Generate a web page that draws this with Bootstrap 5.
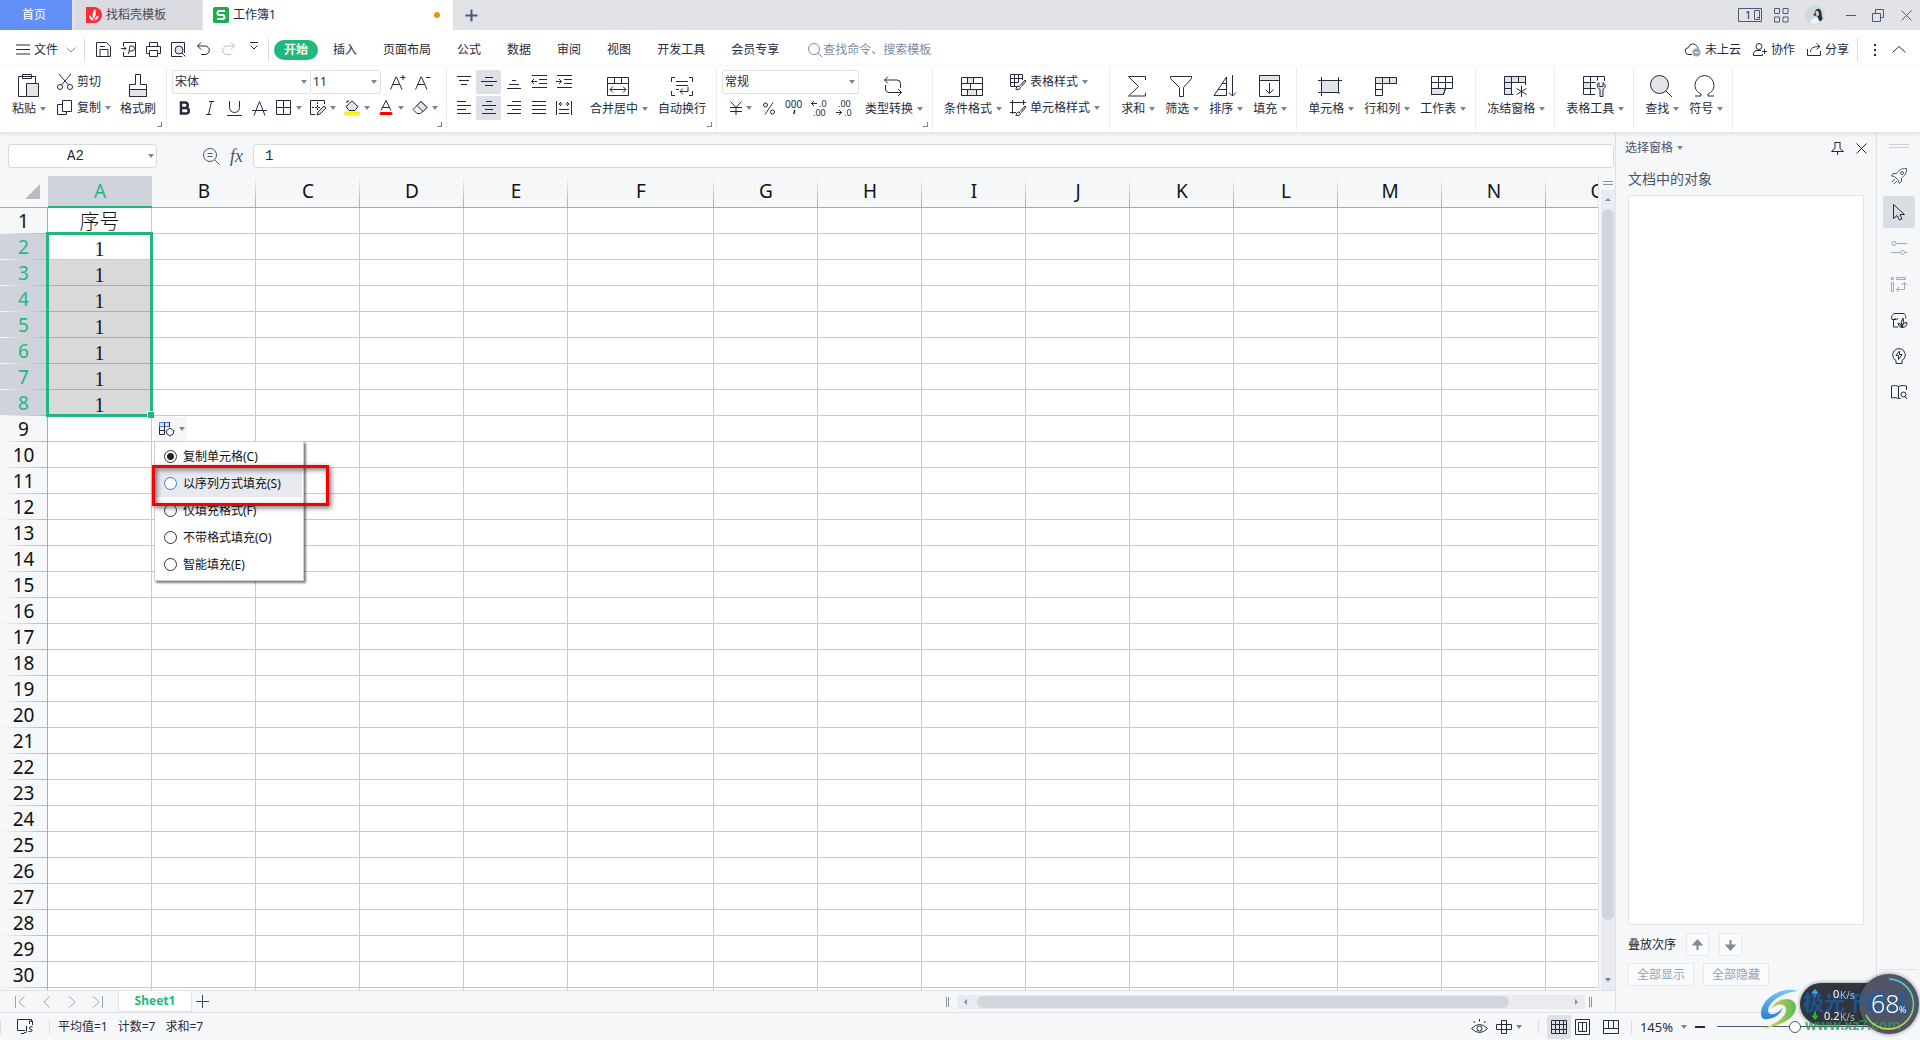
<!DOCTYPE html>
<html lang="zh-CN">
<head>
<meta charset="utf-8">
<meta name="viewport" content="width=device-width, initial-scale=1">
<title>工作簿1</title>
<link href="https://cdn.jsdelivr.net/npm/bootstrap@5.3.0/dist/css/bootstrap.min.css" rel="stylesheet">
<style>
:root{--ink:#252b3d;--muted:#7a859c;--line:#e0e2e8;--pane:#f6f7f9;--cell:#c3c9d8;--go:#21b97b}
body{font:12px/18px "Noto Sans","Noto Sans CJK SC",sans-serif;color:var(--ink);background:var(--pane);height:100vh;overflow:hidden}
button,input,select{font:inherit;color:inherit;padding:0;border:0;background:none}
button{white-space:nowrap}
svg{display:block;flex:none;fill:none;stroke:var(--ink);overflow:visible}
svg text{fill:var(--ink);stroke:none;font-family:"Noto Sans",sans-serif}
.shade{fill:#e3e4e8}
.drop{flex:none;width:0;border:3px solid transparent;border-top:4px solid #7a859c;border-bottom:0}
.vline{flex:none;width:1px;background:#dcdee3}
/* title bar */
.titlebar{height:30px;background:#e1e3e7}
.titlebar svg{stroke:#4b5a7a}
.titlebar .vline{height:20px}
.tab-home{width:72px;background:#628ff8;color:#fff;padding-right:4px}
.tab-doc{width:126px;background:#d9dbe0;margin-left:3px;padding-left:11px;color:#454c60}
.tab-live{width:250px;background:#fff;margin-left:2px;padding:0 13px 0 10px}
.unsaved{width:6px;height:6px;border-radius:50%;background:#e39a06}
/* menu row */
.menubar{height:36px;background:#fff;padding:3px 10px 0 16px}
.menubar .vline{height:24px}
.menu-item{padding:0 13px;color:var(--ink);text-decoration:none}
.menu-now{background:var(--go);color:#fff;font-weight:700;border-radius:10px;padding:1px 10px;margin:0 2px 0 5px}
.quick{width:25px;display:flex;justify-content:center}
.quick-set{margin-left:2px;margin-right:2px}
.cloud-set{gap:12px}
.find-box{width:130px}
.find-box::placeholder{color:#7f89a0;opacity:1}
/* ribbon */
.ribbon{height:67px;background:#fff;padding:2px 0;border-bottom:1px solid #e4e5e9;box-shadow:0 1px 4px #0000001c;position:relative;z-index:1}
.grp{position:relative;display:flex;padding:0 5px;border-right:1px solid #ebecef}
.grp-corner{position:absolute;right:4px;bottom:3px;width:5px;height:5px;border:solid #7a859c;border-width:0 1px 1px 0}
.grp-clip{padding:0 4px 0 6px}
.clip-pair{padding:0 3px 0 7px}
.big{display:flex;flex-direction:column;align-items:center;padding:4px 6px 0}
.big .pic{height:28px;display:flex;align-items:center}
.cap,.lab{display:flex;align-items:center}
.cap .drop{margin:0 -2px 0 4px}
.two{display:flex;flex-direction:column;padding-top:2px;gap:2px}
.two>*{height:24px}
.lab{gap:4px}
.k{width:25px;height:24px;display:flex;align-items:center;justify-content:center}
.kd{width:34px;height:24px;display:flex;align-items:center;gap:4px;padding-left:4px}
.k-on{background:#dde1e7;border-radius:2px}
.pick{display:flex;align-items:center;border:1px solid #dfe1e6;border-radius:2px;padding-right:3px;background:#fff}
.pick select{appearance:none;flex:1;min-width:0;padding-left:2px;height:22px;outline:0}
.pick-font{width:139px}
.pick-size{width:70px}
.pick-num{width:137px}
/* formula bar */
.fbar{padding:11px 1px 8px 8px;height:43px}
.namebox{width:149px;height:24px;border:1px solid #d9dbe1;border-radius:3px;background:#fff;padding-right:2px}
.namebox input{flex:1;min-width:0;padding-right:6px;text-align:center;font:14px "Liberation Mono",monospace}
.lens{margin-left:46px}
.fx{width:33px;font:italic 18px "Liberation Serif",serif;color:#4a5368}
.fedit{border:1px solid #d9dbe1;border-radius:3px;background:#fff;height:24px;padding:0 11px;font:14px "Liberation Mono",monospace}
/* sheet */
.sheet{position:relative;overflow:hidden;background:#fff;border-right:1px solid var(--line)}
.cells{table-layout:fixed;width:1650px;border-collapse:separate;border-spacing:0}
.cells th,.cells td{height:26px;padding:0;text-align:center;border:solid var(--cell);border-width:0 1px 1px 0;line-height:25px;overflow:hidden;white-space:nowrap}
.cells th{font-size:19px;font-weight:400;color:#111;background:var(--pane)}
.cells thead th{height:32px;line-height:31px;border-bottom-color:#9fabc4;border-right:0;background:linear-gradient(#f6f7f9,#9fabc4) right/1px 100% no-repeat var(--pane)}
.cells tbody th{border-right-color:#9fabc4;border-bottom:0;background:linear-gradient(90deg,#f6f7f9,#aab4c8) bottom/100% 1px no-repeat var(--pane)}
.cells tbody th{line-height:24px}
.cells thead th.sel{background:#d0d3db;color:var(--go);border-bottom:2px solid var(--go);line-height:30px}
.cells tbody th.sel{background-color:#d0d3db;color:var(--go)}
.cells td{font:20px/25px "Liberation Serif","Noto Sans CJK SC",serif;color:#111}
.cells td span{display:block;height:25px;line-height:30px}
.cells td .word{font-weight:300;line-height:29px}
.cells td.fill{background:#d9d9d9;border-bottom-color:#a9adb8}
.cells thead th.corner{background:var(--pane)}
.range{position:absolute;left:46px;top:56px;width:107px;height:185px;border:3px solid var(--go)}
.range::after{content:"";position:absolute;right:-4px;bottom:-4px;width:7px;height:7px;background:var(--go);border:solid #fff;border-width:1px 0 0 1px}
.fillbtn{position:absolute;left:154px;top:241px;width:33px;height:24px;background:var(--pane);display:flex;align-items:center;gap:4px;padding-left:5px}
.fillmenu{position:absolute;left:154px;top:265px;width:150px;background:#fff;border:1px solid #cfd0d4;box-shadow:2px 2px 2px #00000080;padding:1px 1px 2px;color:#111}
.fillmenu label{display:flex;align-items:center;height:27px;padding-left:8px;gap:6px}
.fillmenu .hot{background:#e7e9ef}
.fillmenu input{appearance:none;flex:none;width:13px;height:13px;border:1px solid #333;border-radius:50%;background:#fff}
.fillmenu input:checked{background:radial-gradient(#222 0 3px,#fff 4px)}
.fillmenu .hot input{border-color:#1b82d6}
.hilite{position:absolute;left:152px;top:289px;width:177px;height:41px;border:3px solid #f60000;box-shadow:2px 2px 5px #0008,inset 2px 2px 5px #0008}
/* scroll bars */
.vbar{width:16px;padding:0 1px 0 2px}
.vtrack{background:#e9ebf0;padding:8px 1px}
.vthumb{width:12px;background:#d2d5dd;border-radius:6px;margin-bottom:58px}
.tri{flex:none;width:0;border:3px solid transparent}
.tri-up{border-bottom-color:#7f8cab}
.tri-left{border-right-color:#7f8cab}
.tri-right{border-left-color:#7f8cab}
.tabsrow{height:22px;border-top:1px solid var(--line)}
.tabsrow svg{stroke:#9ba2b0}
.turns{padding:0 7px}
.turn{width:26px;display:flex;justify-content:center}
.tab-sheet{width:74px;height:21px;background:#fff;border:1px solid var(--line);border-top:0;color:var(--go);font-weight:700}
.htrack{width:628px;height:14px;background:#e9ebf0;padding:0 7px}
.hthumb{height:12px;background:#d2d5dd;border-radius:6px;margin:0 66px 0 2px}
.grip{width:3px;height:10px;border:solid #8b93a8;border-width:0 1px}
.grip-end{margin-right:23px}
/* selection pane and tool strip */
.pane{width:262px;border-left:1px solid var(--line);border-right:1px solid var(--line);padding:6px 9px 0 9px;color:#4a5368}
.pane h2{font-size:14px;line-height:20px;margin:12px 0 6px 3px;font-weight:400}
.objlist{border:1px solid var(--line);border-radius:2px;background:#fff;margin:0 3px}
.pbtn{height:23px;border:1px solid #e6e8ed;background:#fafbfc;color:#98a1b3}
.pbtn-sq{width:23px;margin-left:10px}
.order{margin:8px 0 0 3px}
.showhide{gap:9px;margin:7px 0 26px 3px}
.strip{width:43px;padding-top:11px}
.strip button{width:32px;height:32px;margin-bottom:4px;display:flex;align-items:center;justify-content:center;border-radius:3px}
.strip .handle{margin-bottom:12px}
.strip .foot{margin-bottom:42px}
.strip .strip-on{background:#d9dde4}
.pale{stroke:#a0a7b5}
/* status bar */
.status{height:28px;border-top:1px solid var(--line);padding:0 22px 0 0}
.status .vline{height:14px}
.sums{gap:10px}
.zoom-pct{font-size:13px}
.vw{width:24px;height:24px;display:flex;align-items:center;justify-content:center}
.zoomer{appearance:none;width:168px;height:14px;background:linear-gradient(#4b5a7a,#4b5a7a) center/100% 1px no-repeat}
.zoomer::-webkit-slider-thumb{appearance:none;width:12px;height:12px;border-radius:50%;border:1px solid #555;background:#fff}
.meter{position:fixed;right:0;bottom:6px;width:160px;height:60px}
</style>
<script src="https://cdn.jsdelivr.net/npm/bootstrap@5.3.0/dist/js/bootstrap.bundle.min.js"></script>
</head>
<body class="d-flex flex-column">

<header class="titlebar d-flex align-items-center flex-shrink-0">
  <button class="tab-home h-100">首页</button>
  <button class="tab-doc h-100 d-flex align-items-center gap-1"><svg width="16" height="16"><path d="M0 0h8a8 8 0 0 1 0 16H0z" fill="#fb2d3c" stroke="none"/><path d="M7.500 14c-3-1-4.500-3-4.500-6 2 1 4 3 4.500 6zM7.500 12C5.800 8 6.500 4.500 9 2c1.500 3.500 1 7-1.500 10zM8.500 13.500c.3-2.500 1.500-4 4-5 .3 2.500-1 4.500-4 5z" fill="#fff" stroke="none"/></svg>找稻壳模板</button>
  <button class="tab-live h-100 d-flex align-items-center gap-1"><svg width="16" height="16"><rect width="16" height="16" rx="2" fill="#1ead4e" stroke="none"/><path d="M12 4H6.500a2 2 0 0 0 0 4h3a2 2 0 0 1 0 4H4" stroke="#fff" stroke-width="2"/></svg>工作簿1<span class="unsaved ms-auto"></span></button>
  <button class="ms-2 ps-1 pe-2" aria-label="新建标签"><svg width="13" height="13"><path d="M6.500.5v12M.5 6.500h12" stroke-width="2"/></svg></button>
  <div class="ms-auto d-flex align-items-center pe-2">
    <button aria-label="窗口"><svg width="24" height="14"><path d="M.5.5h23v13H.5zM16.500 2.500h5v9h-5zM19 9.500h2"/><text x="7" y="11" font-size="11">1</text></svg></button>
    <button class="ms-2 ps-1" aria-label="应用"><svg width="15" height="15"><path d="M.5.5h5v5h-5zM9 .5h5v5H9zM.5 9h5v5h-5zM9 9h5v5H9z"/></svg></button>
    <button class="ms-3" aria-label="账户"><svg width="20" height="20"><circle cx="10" cy="10" r="10" fill="#cddae1" stroke="none"/><path d="M11 4.500c3-2 5.500 0 5.500 4l1 6-3 2-2-5-4.500-1.500c2-1 2-4 3-5.500z" fill="#2d2b36" stroke="none"/><path d="M11 6c2-1 3 1 3 3s-1 2-2 2-2-3-1-5z" fill="#e8c3b4" stroke="none"/><path d="M5 18c1-4 4-6 7-5l3 4c-3 2-7 2-10 1z" fill="#eef6fa" stroke="none"/></svg></button>
    <span class="vline ms-2 me-2"></span>
    <button class="ms-1" aria-label="最小化"><svg width="10" height="10"><path d="M0 5.500h10"/></svg></button>
    <button class="ms-3" aria-label="还原"><svg width="13" height="13"><path d="M.5 4.500h8v8h-8zM3.500 4V.5h8v8H9"/></svg></button>
    <button class="ms-3 me-0" aria-label="关闭"><svg width="11" height="11"><path d="M.5.5l10 10M10.500.5l-10 10"/></svg></button>
  </div>
</header>

<nav class="menubar d-flex align-items-center flex-shrink-0">
  <button class="d-flex align-items-center"><svg width="14" height="12" class="me-1"><path d="M0 1h14M0 5.500h14M0 10h14"/></svg><span class="ms-0 me-2 ps-0">文件</span><svg width="10" height="6"><path d="M.5.5L5 5 9.500.5" stroke="#8c93a3"/></svg></button>
  <span class="vline ms-2 me-1"></span>
  <div class="quick-set d-flex">
  <button class="quick" aria-label="保存"><svg width="15" height="15"><path d="M.5.5h10l4 4v10H.5zM4 14V7.500h8V14M4 4.500h5"/></svg></button>
  <button class="quick" aria-label="输出"><svg width="16" height="15"><path d="M2.500 4V.5h12v14h-12V10M0 6.500h5M3 4.500l2 2-2 2M7.500 12l1.500-8h2a2 2 0 0 1 0 5H8"/></svg></button>
  <button class="quick" aria-label="打印"><svg width="15" height="15"><path d="M3.500 4V.5h8V4M3.500 11.500h-3v-7h14v7h-3M3.500 8.500h8v6h-8z"/></svg></button>
  <button class="quick" aria-label="预览"><svg width="15" height="15"><path d="M11 14.500H.5V.5h13V11"/><circle cx="8" cy="8" r="4" class="shade"/><path d="M11 11l3.500 3.500"/></svg></button>
  <button class="quick" aria-label="撤销"><svg width="13" height="13"><path d="M4 .5L.5 4 4 7.500M.5 4H8a4.200 4.200 0 0 1 0 8.500H4"/></svg></button>
  <button class="quick" aria-label="重做"><svg width="13" height="13"><path d="M9 .5L12.500 4 9 7.500M12.500 4H5a4.200 4.200 0 0 0 0 8.500h4" stroke="#b8bcc6"/></svg></button>
  <button class="quick" aria-label="更多"><svg width="8" height="8"><path d="M0 .5h8M.5 3.500L4 7l3.500-3.500"/></svg></button>
  </div>
  <span class="vline"></span>
  <a class="menu-item menu-now" href="#">开始</a><a class="menu-item" href="#">插入</a><a class="menu-item" href="#">页面布局</a><a class="menu-item" href="#">公式</a><a class="menu-item" href="#">数据</a><a class="menu-item" href="#">审阅</a><a class="menu-item" href="#">视图</a><a class="menu-item" href="#">开发工具</a><a class="menu-item" href="#">会员专享</a>
  <label class="d-flex align-items-center ms-3"><svg width="15" height="14"><circle cx="6" cy="6" r="5.500" stroke="#7f89a0"/><path d="M10 10l4 4" stroke="#7f89a0"/></svg><input class="find-box" placeholder="查找命令、搜索模板"></label>
  <div class="ms-auto d-flex align-items-center">
    <div class="cloud-set d-flex">
    <button class="d-flex align-items-center gap-1"><svg width="16" height="14"><path d="M7 11.500H4a3.500 3.500 0 0 1-.5-7A4.500 4.500 0 0 1 12 3.500a3 3 0 0 1 1 3"/><circle cx="11.500" cy="9.500" r="4" fill="#98a2b8" stroke="none"/><path d="M9.500 9.500h4" stroke="#fff"/></svg>未上云</button>
    <button class="d-flex align-items-center gap-1"><svg width="14" height="14"><circle cx="6" cy="3.500" r="3"/><path d="M8 7.500H3C1 8 .5 10 .5 12.500h9V11M9 8.500h5M11.500 6v5"/></svg>协作</button>
    <button class="d-flex align-items-center gap-1"><svg width="14" height="13"><path d="M.5 6v6.500h13V8M3.500 9c0-4 3-5.500 9-5.500M9.500.5l3.500 3-3.500 3"/></svg>分享</button>
    </div>
    <span class="vline ms-2"></span>
    <button class="px-3" aria-label="更多选项"><svg width="2" height="12"><path d="M1 0v2M1 5v2M1 10v2" stroke-width="2"/></svg></button>
    <button class="me-1" aria-label="收起功能区"><svg width="14" height="7"><path d="M.5 6.500L7 .5l6.500 6"/></svg></button>
  </div>
</nav>

<section class="ribbon d-flex flex-shrink-0" aria-label="开始">
  <div class="grp grp-clip">
    <button class="big"><span class="pic"><svg width="21" height="24"><path d="M8 22.500H.5v-20h17V9M4.500.5h9v4h-9z"/><path d="M8.500 9.500h12v13h-12z" class="shade"/></svg></span><span class="cap">粘贴<i class="drop"></i></span></button>
    <div class="two clip-pair">
      <button class="lab"><svg width="16" height="16"><path d="M2 0l9.500 11M14 0L4.500 11"/><circle cx="3" cy="13" r="2.500"/><circle cx="13" cy="13" r="2.500"/></svg>剪切</button>
      <button class="lab"><svg width="16" height="16"><path d="M5.500.5h9v11h-9zM5 4.500H.5v10h9V12"/></svg>复制<i class="drop"></i></button>
    </div>
    <button class="big"><span class="pic"><svg width="18" height="24"><path d="M6.500.5h5v10h6v12H.5v-12h6z"/><path d="M.5 15.500h17v7H.5z" class="shade"/></svg></span><span class="cap">格式刷</span></button>
    <i class="grp-corner"></i>
  </div>

  <div class="grp pe-1">
    <div class="two">
      <div class="d-flex">
        <div class="pick pick-font"><select aria-label="字体"><option>宋体</option></select><i class="drop"></i></div>
        <div class="pick pick-size border-start-0 me-1"><select aria-label="字号"><option>11</option></select><i class="drop"></i></div>
        <button class="k" aria-label="增大字号"><svg width="15" height="15"><path d="M.5 14.500L6 2h.5L12 14.500M2.500 9.500h7M10.500 2.500h5M13 0v5"/></svg></button>
        <button class="k" aria-label="减小字号"><svg width="15" height="15"><path d="M.5 14.500L6 2h.5L12 14.500M2.500 9.500h7M11 2.500h4.500"/></svg></button>
      </div>
      <div class="d-flex">
        <button class="k" aria-label="加粗"><svg width="11" height="14"><path d="M2 1.500h4a2.700 2.700 0 0 1 0 5.500H2zM2 7h5a2.700 2.700 0 0 1 0 5.500H2z" stroke-width="2.500"/></svg></button>
        <button class="k" aria-label="倾斜"><svg width="8" height="14"><path d="M3 .5h5M0 13.500h5M5.500.5l-3 13"/></svg></button>
        <button class="k" aria-label="下划线"><svg width="15" height="15"><path d="M2.500 0v6.500a5 5 0 0 0 10 0V0M0 14.500h15"/></svg></button>
        <button class="k" aria-label="删除线"><svg width="15" height="15"><path d="M2 14.500L7.500.5l5.500 14M0 9.500h15"/></svg></button>
        <button class="kd" aria-label="边框"><svg width="16" height="16"><path d="M.5.5h14v14H.5zM7.500.5v14M.5 7.500h14"/></svg><i class="drop"></i></button>
        <button class="kd" aria-label="绘图边框"><svg width="16" height="16"><path d="M5 14.500H.5V.5h14V4"/><path d="M2 7.500h8M7.500 2v9" stroke-dasharray="2 1"/><path d="M7 15l1-3 6-6 2 2-6 6z" class="shade"/></svg><i class="drop"></i></button>
        <button class="kd" aria-label="填充颜色"><svg width="16" height="16"><path d="M2 6.500L8 1l6 5.500-3 4H5zM3 3V1h2" class="shade"/><rect x=".5" y="12" width="15" height="3" rx="1.500" fill="#ff0" stroke="#bdbd2a" stroke-width=".5"/></svg><i class="drop"></i></button>
        <button class="kd" aria-label="字体颜色"><svg width="16" height="16"><path d="M3 10.500L8 .5l5 10M4.500 7.500h7"/><rect x="1.500" y="12" width="13" height="3" rx="1.500" fill="red" stroke="none"/></svg><i class="drop"></i></button>
        <button class="kd" aria-label="清除"><svg width="16" height="16"><path d="M1 9.500l8-8 6 6-6.500 6H5z"/><path d="M5 5.500l4-4 6 6-4 4z" class="shade"/></svg><i class="drop"></i></button>
      </div>
    </div>
    <i class="grp-corner"></i>
  </div>

  <div class="grp px-1">
    <div class="two me-2">
      <div class="d-flex">
        <button class="k" aria-label="顶端对齐"><svg width="14" height="14"><path d="M0 1.500h14M2 5.500h10M4 9.500h6"/></svg></button>
        <button class="k k-on" aria-label="垂直居中"><svg width="16" height="10"><path d="M4 .5h8M0 4.500h16M4 8.500h8"/></svg></button>
        <button class="k" aria-label="底端对齐"><svg width="14" height="14"><path d="M5 5.500h4M2 9.500h10M0 13.500h14"/></svg></button>
        <button class="k" aria-label="减少缩进"><svg width="16" height="14"><path d="M1 .5h15M8 4.500h8M8 8.500h8M1 12.500h15M.5 6.500H6M3 4L.5 6.500 3 9"/></svg></button>
        <button class="k" aria-label="增加缩进"><svg width="16" height="14"><path d="M1 .5h15M8 4.500h8M8 8.500h8M1 12.500h15M0 6.500h5.500M3 4l2.500 2.500L3 9"/></svg></button>
      </div>
      <div class="d-flex">
        <button class="k" aria-label="左对齐"><svg width="14" height="14"><path d="M0 .5h9M0 4.500h14M0 8.500h9M0 12.500h14"/></svg></button>
        <button class="k k-on" aria-label="水平居中"><svg width="14" height="14"><path d="M4 .5h6M0 4.500h14M3 8.500h8M0 12.500h14"/></svg></button>
        <button class="k" aria-label="右对齐"><svg width="14" height="14"><path d="M5 .5h9M0 4.500h14M5 8.500h9M0 12.500h14"/></svg></button>
        <button class="k" aria-label="两端对齐"><svg width="14" height="14"><path d="M0 .5h14M0 4.500h14M0 8.500h14M0 12.500h14"/></svg></button>
        <button class="k" aria-label="分散对齐"><svg width="16" height="14"><path d="M.5 0v14M15.500 0v14M3 8.500h10M3 12.500h10M3 3h3.500M9.500 3H13M5 1L3 3l2 2M11 1l2 2-2 2"/></svg></button>
      </div>
    </div>
    <button class="big"><span class="pic"><svg width="22" height="19"><path d="M.5.5h21v18H.5zM.5 6.500h21M7.500.5v6M14.500.5v6M3 12.500h16M6 9.500l-3 3 3 3M16 9.500l3 3-3 3"/></svg></span><span class="cap">合并居中<i class="drop"></i></span></button>
    <button class="big"><span class="pic"><svg width="22" height="19"><path d="M4 .5H.5V5M18 .5h3.500V5M4 18.500H.5V14M18 18.500h3.500V14M5 4.500h12M5 8.500h12M5 12.500h3M17 10v4.500H9M12 11.500l-3 3 3 3"/></svg></span><span class="cap">自动换行</span></button>
    <i class="grp-corner"></i>
  </div>

  <div class="grp">
    <div class="two">
      <div class="pick pick-num"><select aria-label="数字格式"><option>常规</option></select><i class="drop"></i></div>
      <div class="d-flex">
        <button class="kd ps-2" aria-label="货币"><svg width="12" height="14"><path d="M.5.5L6 6.500l5.500-6M6 6.500V14M0 6.500h12M0 10.500h12"/></svg><i class="drop"></i></button>
        <button class="k" aria-label="百分比"><svg width="12" height="13"><circle cx="2.500" cy="3" r="2"/><circle cx="9.500" cy="10" r="2"/><path d="M10 .5L2 12.500"/></svg></button>
        <button class="k" aria-label="千位分隔"><svg width="18" height="16"><text x="0" y="8" font-size="10">000</text><path d="M9.500 10v2l-1 2" stroke-width="1.500"/></svg></button>
        <button class="k" aria-label="增加小数位"><svg width="16" height="16"><path d="M0 3.500h6M3 1L.5 3.500 3 6"/><text x="8" y="7" font-size="9">.0</text><text x="2" y="16" font-size="9">.00</text></svg></button>
        <button class="k" aria-label="减少小数位"><svg width="16" height="16"><path d="M0 12.500h6M3 10l2.500 2.500L3 15"/><text x="2" y="7" font-size="9">.00</text><text x="8" y="16" font-size="9">.0</text></svg></button>
      </div>
    </div>
    <button class="big"><span class="pic"><svg width="18" height="21"><path d="M4 .5L.5 4 4 7.500M.5 4H13q3.500 0 3.500 3.500V12M14 13l3.500 3.500L14 20M17.500 16.500H5Q1.500 16.500 1.500 13V9"/></svg></span><span class="cap">类型转换<i class="drop"></i></span></button>
    <i class="grp-corner"></i>
  </div>

  <div class="grp">
    <button class="big"><span class="pic"><svg width="22" height="19"><path d="M6.500.5h6v6h-6zM6.500 12.500h9v6h-9z" class="shade"/><path d="M.5.5h21v18H.5zM.5 6.500h21M.5 12.500h21M6.500.5v6M12.500.5v6M9.500 6.500v6M6.500 12.500v6M15.500 12.500v6"/></svg></span><span class="cap">条件格式<i class="drop"></i></span></button>
    <div class="two px-1">
      <button class="lab"><svg width="16" height="16"><path d="M8 12.500H.5V.5h12V6M.5 4.500h12M.5 8.500h8M4.500.5v12M8.500.5v8"/><path d="M6 15.500c0-2 1-3.500 3-3.500l1.500 1.500c0 1.500-2 2.500-4.500 2zM10 11.500l5-5.500 1 1-4.500 5.500" class="shade"/></svg>表格样式<i class="drop"></i></button>
      <button class="lab"><svg width="16" height="16"><path d="M2.500 0v14M0 2.500h16M13.500 0v5M0 12.500h6"/><path d="M6 15.500c0-2 1-3.500 3-3.500l1.500 1.500c0 1.500-2 2.500-4.500 2zM10 11.500l5-5.500 1 1-4.500 5.500" class="shade"/></svg>单元格样式<i class="drop"></i></button>
    </div>
  </div>

  <div class="grp">
    <button class="big"><span class="pic"><svg width="18" height="21"><path d="M17.500 4V.5H.5l10 10-10 9.500h17V17"/></svg></span><span class="cap">求和<i class="drop"></i></span></button>
    <button class="big"><span class="pic"><svg width="22" height="21"><path d="M.5.500h21v2l-8 9v9h-4v-9l-9-9z"/></svg></span><span class="cap">筛选<i class="drop"></i></span></button>
    <button class="big"><span class="pic"><svg width="24" height="22"><path d="M1 20.500L13.500 2v18.500zM5 14.500h8.500M9 8.500h4.500M19.500 0v21M16 17.500l3.500 3.500 3.500-3.500"/></svg></span><span class="cap">排序<i class="drop"></i></span></button>
    <button class="big"><span class="pic"><svg width="21" height="22"><path d="M.5.5h20v21H.5z"/><path d="M.5.5h20v5H.5z" class="shade"/><path d="M10.500 8v10M6.500 14.500l4 4 4-4"/></svg></span><span class="cap">填充<i class="drop"></i></span></button>
  </div>
  <div class="grp">
    <button class="big"><span class="pic"><svg width="24" height="19"><path d="M3.500 3.500h17v12h-17z" class="shade"/><path d="M3.500 0v19M20.500 0v13M0 3.500h24M0 15.500h18M20 16h2" /></svg></span><span class="cap">单元格<i class="drop"></i></span></button>
    <button class="big"><span class="pic"><svg width="22" height="19"><path d="M.5.500h21v6H7.500v12h-7z"/><path d="M.5.500h21v6H.5z" class="shade"/><path d="M7.500.5v6M14.500.5v6M.5 12.500h7"/></svg></span><span class="cap">行和列<i class="drop"></i></span></button>
    <button class="big"><span class="pic"><svg width="22" height="20"><path d="M.5 12.500h14l-2 6H.5z" class="shade"/><path d="M.5.500h21v12h-7l-2 6H.5zM.5 6.500h21M.5 12.500h14M7.500.5v12M14.500.5v12"/></svg></span><span class="cap">工作表<i class="drop"></i></span></button>
  </div>
  <div class="grp">
    <button class="big"><span class="pic"><svg width="23" height="21"><path d="M.5.500h21v6H7.500v12h-7z" class="shade"/><path d="M21.500.5V9M7.500.5v18M14.500.5v6M.5 6.500h21M.5 12.500h7M.5 18.500h9M17.500 10v11M12.500 12.500l10 6M22.500 12.500l-10 6"/></svg></span><span class="cap">冻结窗格<i class="drop"></i></span></button>
  </div>
  <div class="grp">
    <button class="big"><span class="pic"><svg width="23" height="21"><path d="M.5 6.500h7v6h-7z" class="shade"/><path d="M12 18.500H.5V.5h21V5M.5 6.500h12M.5 12.500h12M7.500.5v18M14.500.5v4"/><path d="M17 20.500v-7c-4-2-3-6-1-7v4h4v-4c3 2 3 5 0 7v7z" class="shade"/></svg></span><span class="cap">表格工具<i class="drop"></i></span></button>
  </div>
  <div class="grp">
    <button class="big"><span class="pic"><svg width="22" height="22"><circle cx="9.500" cy="9.500" r="9" class="shade"/><path d="M16 16l6 6"/></svg></span><span class="cap">查找<i class="drop"></i></span></button>
    <button class="big"><span class="pic"><svg width="22" height="22"><path d="M1 21h6v-2C3 17 1 14 1 10.500a9.500 10 0 0 1 19 0C20 14 18 17 14 19v2h6"/></svg></span><span class="cap">符号<i class="drop"></i></span></button>
  </div>
</section>

<main class="d-flex flex-grow-1 overflow-hidden">
  <div class="d-flex flex-column flex-grow-1 overflow-hidden">
    <div class="fbar d-flex align-items-center">
      <div class="namebox d-flex align-items-center"><input value="A2" aria-label="名称框"><i class="drop"></i></div>
      <svg width="17" height="17" class="lens"><circle cx="7" cy="7" r="6.500" stroke="#4a5368"/><path d="M11.500 11.500l5 5M4.500 5.500h5M4.500 8.500h5" stroke="#4a5368"/></svg>
      <button class="fx" aria-label="插入函数">fx</button>
      <input class="fedit flex-grow-1" value="1" aria-label="编辑栏">
    </div>
    <div class="d-flex flex-grow-1 overflow-hidden">
      <div class="sheet flex-grow-1">
        <table class="cells">
          <colgroup id="cols"></colgroup>
          <thead><tr id="heads"></tr></thead>
          <tbody id="rows"></tbody>
        </table>
        <div class="range"></div>
        <button class="fillbtn" aria-label="自动填充选项"><svg width="16" height="14"><path d="M.5.500h5v4h-5zM5.500.500h5v4h-5z" fill="#d6e4ff" stroke="#4d7fe0"/><path d="M.5 4.500v8h5v-12M.5 8.500h5M10.500 0v5M7 9l4-3 4 3-1 3-3 2-3-2z"/></svg><i class="drop"></i></button>
        <form class="fillmenu">
          <label><input type="radio" name="fill" checked>复制单元格(C)</label>
          <label class="hot"><input type="radio" name="fill">以序列方式填充(S)</label>
          <label><input type="radio" name="fill">仅填充格式(F)</label>
          <label><input type="radio" name="fill">不带格式填充(O)</label>
          <label><input type="radio" name="fill">智能填充(E)</label>
        </form>
        <div class="hilite"></div>
      </div>
      <div class="vbar d-flex flex-column align-items-center">
        <svg width="10" height="14"><path d="M0 5.500h10M0 8.500h10" stroke="#8b93a8"/></svg>
        <div class="vtrack d-flex flex-column align-items-center flex-grow-1 justify-content-between">
          <i class="tri tri-up border-top-0 mb-2"></i>
          <div class="vthumb flex-grow-1"></div>
          <i class="drop"></i>
        </div>
      </div>
    </div>
    <div class="tabsrow d-flex align-items-center flex-shrink-0">
      <div class="turns d-flex">
        <button class="turn" aria-label="首个工作表"><svg width="10" height="12"><path d="M.5 0v12M9.500.5L4 6l5.500 5.500"/></svg></button>
        <button class="turn" aria-label="上一个"><svg width="7" height="12"><path d="M6.500.5L1 6l5.500 5.500"/></svg></button>
        <button class="turn" aria-label="下一个"><svg width="7" height="12"><path d="M.5.5L6 6 .5 11.500"/></svg></button>
        <button class="turn" aria-label="末个工作表"><svg width="10" height="12"><path d="M9.500 0v12M.5.500L6 6 .5 11.500"/></svg></button>
      </div>
      <button class="tab-sheet">Sheet1</button>
      <button class="ms-1" aria-label="新建工作表"><svg width="13" height="13"><path d="M6.500 0v13M0 6.500h13" stroke="#3c465c"/></svg></button>
      <i class="grip ms-auto me-2"></i>
      <div class="htrack d-flex align-items-center">
        <i class="tri tri-left border-start-0 me-2"></i>
        <div class="hthumb flex-grow-1"></div>
        <i class="tri tri-right border-end-0"></i>
      </div>
      <i class="grip grip-end ms-1"></i>
    </div>
  </div>

  <aside class="pane d-flex flex-column flex-shrink-0">
    <div class="d-flex align-items-center">选择窗格<i class="drop ms-1"></i>
      <button class="ms-auto" aria-label="固定"><svg width="13" height="13"><path d="M3.500.5h6M4 .5v6L.5 9.500h12L9 6.500v-6M6.500 9.500V13"/></svg></button>
      <button class="ms-2 ps-1 me-0" aria-label="关闭窗格"><svg width="11" height="11"><path d="M.5.5l10 10M10.500.5l-10 10"/></svg></button>
    </div>
    <h2>文档中的对象</h2>
    <div class="objlist flex-grow-1"></div>
    <div class="order d-flex align-items-center text-dark">叠放次序
      <button class="pbtn pbtn-sq" aria-label="上移"><svg width="21" height="12"><path d="M10.500 2v9M7 5.500l3.500-4 3.500 4z" stroke="#7f8798" stroke-width="2"/></svg></button>
      <button class="pbtn pbtn-sq" aria-label="下移"><svg width="21" height="12"><path d="M10.500 1v9M7 6.500l3.500 4 3.500-4z" stroke="#7f8798" stroke-width="2"/></svg></button>
    </div>
    <div class="showhide d-flex"><button class="pbtn px-2">全部显示</button><button class="pbtn px-2">全部隐藏</button></div>
  </aside>

  <aside class="strip d-flex flex-column align-items-center flex-shrink-0">
    <svg width="20" height="4" class="handle"><path d="M0 .5h20M0 3.500h20" stroke="#cdd0d7"/></svg>
    <button aria-label="新功能"><svg width="16" height="16"><path d="M15.500.5c-5-.5-8 2-10 5H2L.5 8l3 .5 4 4 .5 3 2.500-2v-3.500c3-2 5.500-5 5-9.500zM4 11l-3.500 3M6 13l-3 3" stroke="#4b5a7a"/><circle cx="11" cy="5" r="1.500" stroke="#4b5a7a"/></svg></button>
    <button class="strip-on" aria-label="选择"><svg width="13" height="17"><path d="M1.500.5v14l3.500-3 2.500 4.500 2.500-1-2-4.500h4.500z"/></svg></button>
    <button aria-label="属性"><svg width="16" height="14" class="pale"><circle cx="3" cy="2.500" r="2"/><circle cx="11.500" cy="11.500" r="2"/><path d="M5 2.500h11M0 11.500h9.500M13.500 11.500H16"/></svg></button>
    <button aria-label="透视"><svg width="16" height="15" class="pale"><path d="M.5.500h2v2h-2zM5.500.500h9v2h-9zM.5 5.500h2v9h-2zM6 12.500h7.500V6M8 10l-2.500 2.500L8 15M11 8l2.500-2.500L16 8"/></svg></button>
    <button aria-label="图库"><svg width="16" height="15"><path d="M2.500 7v7H7M1 6.500C0 5 .5 1 4 .5h8c3 .5 3 3 2.500 5M1 6.500h3V5M4 6.500q2 1 3-1.500"/><path d="M7 10q3 0 4 4.500Q8 15 7 10zM11 14q-2-5 1-9 2 4-1 9zM11 14.500q0-5 5-5 0 5-5 5z" class="shade"/></svg></button>
    <button aria-label="灵感"><svg width="14" height="16"><path d="M4 15.500v-3A6.300 6.300 0 1 1 10 12.500v3zM7.500 3L4 7.500h2.500v4L10 6.500H7.500z"/></svg></button>
    <button aria-label="查阅"><svg width="16" height="14"><path d="M7.500 13.500C5 12.500 3 12.500.5 13V1c3-.8 5-.5 7 .5zM7.500 1.500c2-1 5-1.300 8-.5v4M7.500 13.500h2"/><circle cx="12.500" cy="9.500" r="2.500"/><path d="M14 11.500l2 2.500"/></svg></button>
    <svg width="38" height="1" class="foot mt-auto"><path d="M0 .5h38" stroke="#e0e2e8"/></svg>
  </aside>
</main>

<footer class="status d-flex align-items-center flex-shrink-0">
  <span class="vline"></span>
  <svg width="16" height="15" class="ms-3"><path d="M8 11.500H.5V.500h14V3M4 14.500h3M9.500 7v5.500q0 2-2.500 1M15.500 8q-3-1-3 1t2.500 2q1 2-3.500 1.500M12.500 5V2h3v4"/></svg>
  <span class="vline ms-3 me-2"></span>
  <span class="sums d-flex"><span>平均值=1</span><span>计数=7</span><span>求和=7</span></span>
  <div class="ms-auto d-flex align-items-center">
    <button aria-label="护眼模式"><svg width="17" height="15"><path d="M.5 9.500q8-8 16 0-8 8-16 0zM8.500 0v2.500M2.500 2l1.500 2M14.500 2L13 4"/><circle cx="8.500" cy="9.500" r="2.500"/></svg></button>
    <button class="d-flex align-items-center gap-1 ms-2" aria-label="阅读模式"><svg width="16" height="14"><path d="M5.500.5h5v13h-5zM.5 4.500h15v5H.5z"/></svg><i class="drop"></i></button>
    <span class="vline ms-3 me-2"></span>
    <button class="vw k-on" aria-label="普通视图"><svg width="16" height="14"><path d="M.5.500h15v13H.5zM.5 4.500h15M.5 9.500h15M4.500.500v13M8.500.500v13M12.500.500v13"/></svg></button>
    <button class="vw" aria-label="分页预览"><svg width="15" height="16"><path d="M.5.500h14v15H.5zM3.500 3.500h8v9h-8zM7.500 3v10"/></svg></button>
    <button class="vw ms-1" aria-label="页面布局视图"><svg width="16" height="14"><path d="M.5.500h15v13H.5zM5.500.500v8h5v-8M.5 8.500h15" /></svg></button>
    <span class="vline ms-2 me-2"></span>
    <button class="d-flex align-items-center gap-2"><span class="zoom-pct">145%</span><i class="drop"></i></button>
    <button class="ms-2 me-2" aria-label="缩小"><svg width="10" height="2"><path d="M0 1h10" stroke-width="2"/></svg></button>
    <input class="zoomer ms-1" type="range" min="0" max="100" value="46" aria-label="显示比例">
    <button aria-label="全屏"><svg width="13" height="13"><path d="M.5 4V.5H4M9 .5h3.500V4M12.500 9v3.500H9M4 12.500H.5V9"/></svg></button>
  </div>
</footer>

<svg class="meter" viewBox="0 0 160 60" role="img" aria-label="网速与内存">
  <defs>
    <linearGradient id="arc" x1="0" y1="0" x2="0" y2="1"><stop offset="0" stop-color="#3fd8e0"/><stop offset=".6" stop-color="#5fdc7c"/><stop offset="1" stop-color="#e8e04a"/></linearGradient>
    <linearGradient id="swirl" x1="0" y1="0" x2="0" y2="1"><stop offset="0" stop-color="#7cc4f5"/><stop offset=".6" stop-color="#4b9be0"/><stop offset="1" stop-color="#2e7fd0"/></linearGradient>
    <linearGradient id="leaf" x1="0" y1="0" x2="1" y2="0"><stop offset="0" stop-color="#eadb54"/><stop offset="1" stop-color="#5db95a"/></linearGradient>
    <filter id="soft" x="-20%" y="-20%" width="140%" height="140%"><feDropShadow dx="0" dy="0" stdDeviation="2" flood-opacity=".45"/></filter>
  </defs>
  <path d="M61 9h69v42H61a21 21 0 0 1 0-42z" fill="#31343d" stroke="none" filter="url(#soft)"/>
  <circle cx="129" cy="30" r="30" fill="#4f5566" stroke="none" filter="url(#soft)"/>
  <path d="M55 23v-6M52.500 19.500L55 16.500l2.500 3" stroke="#3fa4ee" stroke-width="2"/>
  <path d="M55 38v6M52.500 41.500l2.500 3 2.500-3" stroke="#2fb43a" stroke-width="2"/>
  <g opacity=".8">
    <text x="43" y="36" font-size="21" font-weight="700" style="fill:#155fa8;font-family:'Noto Sans CJK SC',sans-serif">极光下载站</text>
    <text x="45" y="56" font-size="14" font-weight="700" style="fill:#2f9a56">www.xz7.com</text>
  </g>
  <text x="73" y="24" font-size="11" style="fill:#fff">0</text><text x="80" y="25" font-size="10" style="fill:#b5b9c4">K/s</text>
  <text x="64" y="46" font-size="11" style="fill:#fff">0.2</text><text x="80" y="47" font-size="10" style="fill:#b5b9c4">K/s</text>
  <path d="M129 5a25 25 0 1 1-23 36" stroke="url(#arc)" stroke-width="1.500"/>
  <text x="111" y="39" font-size="25" style="fill:#fff;font-weight:300">68</text><text x="139" y="39" font-size="9" style="fill:#fff">%</text>
  <path d="M38 17C22 12 1 24 1 40c0 4 3 6 6 5 6 0 14-4 16-12-4 6-11 9-14 6-4-6 8-20 29-22z" fill="url(#swirl)" stroke="none"/>
  <path d="M11 35c6-13 25-13 25-2 0 11-15 19-34 22 16-6 25-13 24-20-1-6-9-6-15 0z" fill="url(#leaf)" stroke="none"/>
</svg>

<script>
const names = [..."ABCDEFGHIJKLMNO"];
const lastRow = 30;
const selected = r => r >= 2 && r <= 8;
cols.innerHTML = '<col style="width:48px">' + names.map(n => `<col style="width:${n === "F" ? 146 : 104}px">`).join("");
heads.innerHTML = '<th class="corner"><svg width="15" height="15" class="ms-auto me-2"><path d="M15 0v15H0z" fill="#b9bbc0" stroke="none"/></svg></th>' +
  names.map(n => `<th scope="col"${n === "A" ? ' class="sel"' : ""}>${n}</th>`).join("");
rows.innerHTML = Array.from({length: lastRow + 1}, (_, i) => {
  const r = i + 1;
  const first = r === 1 ? '<td><span class="word">序号</span></td>' : selected(r) ? `<td class="${r > 2 ? "fill" : ""}"><span>1</span></td>` : "<td></td>";
  return `<tr><th scope="row"${selected(r) ? ' class="sel"' : ""}>${r > lastRow ? "" : r}</th>${first}${"<td></td>".repeat(names.length - 1)}</tr>`;
}).join("");
</script>
</body>
</html>
